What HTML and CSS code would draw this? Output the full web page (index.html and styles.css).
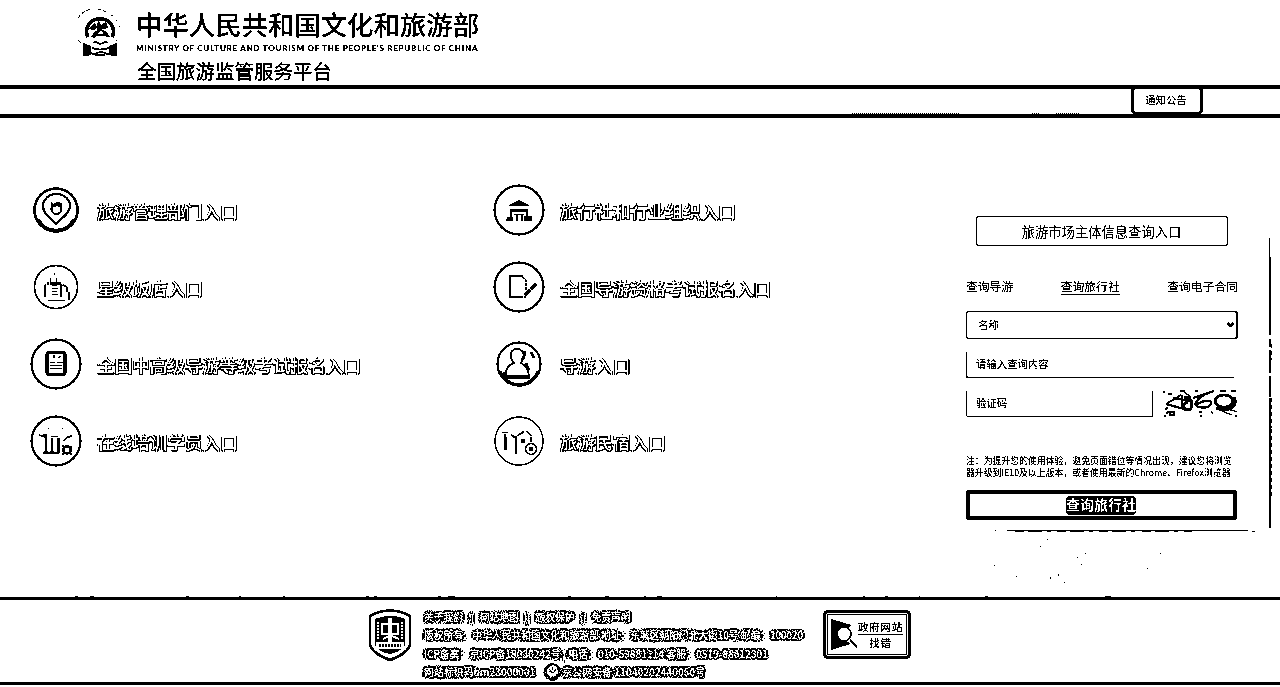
FILE: index.html
```html
<!DOCTYPE html>
<html lang="zh-CN">
<head>
<meta charset="utf-8">
<title>全国旅游监管服务平台</title>
<link rel="stylesheet" href="styles.css">
</head>
<body>
<svg class="defs" width="0" height="0">
  <filter id="bilevel" x="0" y="0" width="100%" height="100%" color-interpolation-filters="sRGB">
    <feComponentTransfer><feFuncR type="discrete" tableValues="0 0 0 1 1"/><feFuncG type="discrete" tableValues="0 0 0 1 1"/><feFuncB type="discrete" tableValues="0 0 0 1 1"/></feComponentTransfer>
  </filter>
  <filter id="speckle" x="-2%" y="-5%" width="104%" height="110%" color-interpolation-filters="sRGB">
    <feTurbulence type="fractalNoise" baseFrequency="0.9" numOctaves="2" seed="4"/>
    <feColorMatrix values="1 0 0 0 0  1 0 0 0 0  1 0 0 0 0  0 0 0 0 1" result="n"/>
    <feComposite in="SourceGraphic" in2="n" operator="arithmetic" k2="1" k3="2" k4="-0.8"/>
    <feComposite in2="SourceAlpha" operator="in"/>
  </filter>
</svg>
<div class="page">
  <header class="header">
    <svg class="emblem" width="44" height="50" viewBox="0 0 44 50">
      <path d="M3 34A20 20 0 0 1 28 3M33 6l2 1M38 11l1 1M41 17l1 1M38 31l1 1" fill="none" stroke="#000" stroke-dasharray="4 1.5"/>
      <path d="M10 28A13.500 12.500 0 1 1 34 28" fill="none" stroke="#000" stroke-width="3.500"/>
      <path d="M11 20l6-6 2 4-3 3zM20 10l3 6 5-3 2 6-6 1-3 4-2-4zM13 28l4-6 5-1-2 4-3 4zM23 21l5 1 4 6h-4z"/>
      <path d="M16 26h12" stroke="#000" stroke-width="1.500"/>
      <path d="M5 34l8 3v8l-3 2H5zM39 34l-8 3v8l3 2h5z"/>
      <path d="M15 34q3-2 5 0t5 0 5 0M14 39q8 3 17 0M10 43q5 3 9 1t8 0 8-1M17 46h10" fill="none" stroke="#000" stroke-width="1.500"/>
    </svg>
    <div class="brand">
      <div class="ministry">中华人民共和国文化和旅游部</div>
      <div class="english">MINISTRY OF CULTURE AND TOURISM OF THE PEOPLE'S REPUBLIC OF CHINA</div>
      <div class="platform">全国旅游监管服务平台</div>
    </div>
  </header>
  <nav class="nav"><svg class="trace" width="228" height="1" viewBox="0 0 228 1"><path d="M0 .500h108M180 .500h8M204 .500h24" stroke="#000" stroke-dasharray="1 1"/></svg><a class="notice">通知公告</a></nav>

  <main class="main">
    <section class="entries">
      <a class="entry"><svg class="icon" viewBox="0 0 52 52"><circle cx="26" cy="26" r="21.500" stroke-width="2.500"/><path d="M9 35a19 19 0 0 0 34 0" stroke-width="1.500"/><path d="M26 40C19 33 13 29 13 22a13.500 12 0 0 1 27 0c0 7-7 11-14 18z" stroke-width="2"/><circle cx="26.500" cy="25" r="5" stroke-width="2"/><path class="solid" d="M21 18l3 2 3-2 5 1v4h-3l-2-1-3 1-3 1z"/></svg><span>旅游管理部门入口</span></a>
      <a class="entry"><svg class="icon" viewBox="0 0 52 52"><circle cx="26" cy="26" r="21.500" stroke-width="1.500"/><path d="M15.500 23v13M20 22.500h11M17 22.500h2M31.500 23v13M37 26v5M39 31v8" stroke-width="1.800"/><path d="M18 39.500h17M22 24.500h5M22 27.500h6M22 30.500h5M22 33.500h6M20.500 17v4M24.500 12v2M26.500 17v4M33 24l4 2" stroke-width="1.400"/></svg><span>星级饭店入口</span></a>
      <a class="entry"><svg class="icon" viewBox="0 0 52 52"><circle cx="26" cy="26" r="24.500" stroke-width="2"/><rect x="17" y="14.500" width="18" height="22" rx="2.500" stroke-width="3"/><path d="M20 24.500h5M27 24.500h6M20 27.500h12M20 30.500h12M24 17v3M28 20l3-2" stroke-width="1"/></svg><span>全国中高级导游等级考试报名入口</span></a>
      <a class="entry"><svg class="icon" viewBox="0 0 52 52"><circle cx="26" cy="26" r="24.500" stroke-width="2"/><path d="M13 38h16" stroke-width="2.600"/><path d="M13 20h3v18M22 23v15M28.500 23v15" stroke-width="2.400"/><path d="M9 20l6 2M21 21.500h7M33 26l5-4 4-1M18 13l1 1M32 14l1-1" stroke-width="1.500"/><circle cx="37" cy="35" r="3.500" stroke-width="2.500"/><path d="M32 30l2 2M40 38l2 2M42 31l-2 2M32 40l2-2"/></svg><span>在线培训学员入口</span></a>
      <a class="entry"><svg class="icon" viewBox="0 0 52 52"><circle cx="26" cy="26" r="24.500" stroke-width="2"/><path class="solid" d="M26 16l10 5v1H16v-1zM17 25h18v3H17zM14 33h6v4h-7zM31 32h8v5h-8zM23 31h2v6h-2zM28 31h2v6h-2z"/><path d="M18 28v8M34 28v8M21 30.500h10"/></svg><span>旅行社和行业组织入口</span></a>
      <a class="entry"><svg class="icon" viewBox="0 0 52 52"><circle cx="26" cy="26" r="24.500" stroke-width="2"/><path d="M30 15H17v21h13" stroke-width="2"/><path d="M29 16l4 3v11M31 36h2" stroke-dasharray="3 1"/><path d="M32 34l5-5M38 28l5-5" stroke-width="3"/></svg><span>全国导游资格考试报名入口</span></a>
      <a class="entry"><svg class="icon" viewBox="0 0 52 52"><circle cx="26" cy="26" r="21.500" stroke-width="2"/><path d="M7 33a20 20 0 0 0 38 0" stroke-width="3"/><path d="M13 39q-2-10 8-14c-6-8-3-14 3-14s9 6 4 14q7 3 8 13" stroke-width="1.600"/><path d="M13 39h24" stroke-width="3"/><path d="M30 14h2l-1 5-2 3M38 14l3 6M33 25l3 7M12 34l-2 4" stroke-width="2.400"/></svg><span>导游入口</span></a>
      <a class="entry"><svg class="icon" viewBox="0 0 52 52"><circle cx="26" cy="26" r="24"/><path d="M9 17.500h6M13 22v13M12 19v16M18 20l5 3M23 21v18M24 21l6-4M33 16l6 5M38 22v5M28 19l3-3" stroke-width="1.500"/><path class="solid" d="M28 24h4v4h-4z"/><circle cx="38" cy="34" r="5.500"/><rect x="36.500" y="33" width="3" height="2"/></svg><span>旅游民宿入口</span></a>
    </section>

    <aside class="panel">
      <h2 class="panel-title">旅游市场主体信息查询入口</h2>
      <div class="tabs"><a>查询导游</a><a class="active">查询旅行社</a><a>查询电子合同</a></div>
      <div class="select"><span>名称</span><svg width="7" height="5" viewBox="0 0 7 5"><path d="M.5 1l3 3 3-3" fill="none" stroke="#000" stroke-width="2.200"/></svg></div>
      <div class="field">请输入查询内容</div>
      <div class="code-row">
        <div class="field code">验证码</div>
        <svg class="captcha" width="74" height="28" viewBox="0 0 74 28">
          <g fill="none" stroke="#000" stroke-width="2.600"><path d="M3 14L18 5M3 14l18 5M19 5v14M10 8l19 3" stroke-width="2"/><path d="M21 8c8-5 11 12 4 12-5 0-6-7 0-8"/><path d="M45 3C33 8 29 16 36 17c7 2 13-1 12-5-3-3-10 0-14 2M30 8L51 1" stroke-width="2.200"/><ellipse cx="61" cy="11" rx="9" ry="6"/><path d="M71 7c5 9-5 16-17 11M53 19l6-3"/></g>
          <path d="M0 2h2M5 4h4M17 1h5M32 1h3M57 1h6M68 1h5M2 20l3-3M7 22h4v3H7zM1 26h2M36 22h3M37 26h2M48 21l2 3M54 19l15 6M62 18l12 4M72 26h2M21 2l7 5M3 24l3-3" fill="none" stroke="#000" stroke-width="1.300"/>
        </svg>
      </div>
      <p class="note">注：为提升您的使用体验，避免页面错位等情况出现，建议您将浏览<br>器升级到IE10及以上版本，或者使用最新的Chrome、Firefox浏览器</p>
      <a class="submit"><span>查询旅行社</span></a>
      <svg class="shade" width="340" height="360" viewBox="0 0 340 360">
        <path d="M334.500 39v19" stroke-width="1"/><path d="M335 58v78M335 140v8M335 151v23M335 177v21M335 199v130" stroke-width="2"/><path d="M336.500 145v16M336.500 199v30M336.500 230v70" stroke-dasharray="4 3"/>
        <path d="M60 331.500h1M72 331.500h241"/><path d="M80 332.500h120M207 332.500h50M317 332.500h3" stroke-dasharray="9 4 14 5 4 6"/>
      </svg>
    </aside>
    <svg class="dust" width="340" height="46" viewBox="0 0 340 46"><path d="M112 .500h1M105 7.500h1M150 14.500h1M142 18.500h1M146 25.500h1M225 14.500h1M212 29.500h1M59 26.500h1M81 37.500h1M115 38v2M123 35v2M129 43.500h1" stroke="#000" shape-rendering="crispEdges"/></svg>
    <svg class="ticks" width="1280" height="1" viewBox="0 0 1280 1"><path d="M75 .500h3M90 .500h4M186 .500h3M239 .500h2M283 .500h2M366 .500h3M374 .500h3M438 .500h3M448 .500h7M568 .500h3M605 .500h4M644 .500h2M657 .500h5M776 .500h1M863 .500h2M885 .500h3M919 .500h1M985 .500h3M1105 .500h6" stroke="#000"/></svg>
  </main>

  <footer class="footer">
    <svg class="shield" width="46" height="56" viewBox="0 0 46 56">
      <path d="M23 2.500Q36 3 43 8v29q-3 9-20 15Q6 46 3 37V8Q10 3 23 2.500z" fill="#fff" stroke="#000" stroke-width="2.500"/>
      <path d="M23 8q9 0 15 3v26q-5 7-15 9Q12 44 8 37V11q7-3 15-3z"/>
      <g class="crest" fill="none" stroke="#fff"><path d="M23 10v24" stroke-width="4"/><path d="M15 16v10h16V16zM16 31l6-3M25 28l7 3" stroke-width="2"/><path d="M11 14v18M35 14v18" stroke-width="2" stroke-dasharray="2 1"/></g>
      <path d="M9 34h28v7H9z" fill="#fff"/><path d="M12 37.500h22" stroke="#000" stroke-width="2" stroke-dasharray="2 1"/>
    </svg>
    <div class="legal">
      <div class="links"><span>关于我们</span><i>||</i><span>网站地图</span><i>||</i><span>版权保护</span><i>||</i><span>免责声明</span></div>
      <div class="owner">版权所有：中华人民共和国文化和旅游部 地址：东城区朝阳门北大街10号 邮编：100020</div>
      <div class="record">ICP备案：京ICP备18030242号 | 电话：010-59881114 客服：0519-88012301</div>
      <div class="site"><span>网站标识码bm23000001</span><svg class="police" width="19" height="18" viewBox="0 0 19 18"><circle cx="9.500" cy="9" r="9"/><circle cx="9.500" cy="8" r="5.500" fill="#fff"/><path d="M6 6q3.500 7 7 0M9.500 4v3" fill="none" stroke="#000" stroke-width="1.500"/></svg><span>京公网安备 11040202440050号</span></div>
    </div>
    <div class="report">
      <svg width="30" height="34" viewBox="0 0 30 34"><path d="M1 1l20 6-3 3a8 8 0 0 0 0 14l2 2L1 32z"/><circle cx="14" cy="16" r="7" fill="#fff" stroke="#000" stroke-width="1.500"/><path d="M20 22l7 7" stroke="#000" stroke-width="2"/></svg>
      <div class="report-text"><span>政府网站</span><span class="second">找错</span></div>
    </div>
  </footer>
</div>
</body>
</html>
```
FILE: styles.css
```css
* { box-sizing: border-box; }
body { margin: 0; background: #fff; color: #000; font-family: "Noto Sans CJK SC", sans-serif; overflow: hidden; }
.defs { display: block; height: 0; }
.page { width: 1280px; height: 687px; background: #fff; display: flex; flex-direction: column; filter: url(#bilevel); }
.header { height: 85px; padding: 8px 0 0 78px; display: flex; gap: 14px; }
.emblem { margin-top: 1px; }
.brand { white-space: nowrap; }
.ministry { font-size: 26.4px; line-height: 32px; font-weight: 500; }
.english { font: 900 8px/12px Lato, sans-serif; letter-spacing: .75px; margin-top: 2px; }
.platform { font-size: 19.5px; line-height: 34px; padding-left: 1px; -webkit-text-stroke: .2px #000; }
.nav { height: 33px; border-top: 4px solid #000; border-bottom: 4px solid #000; display: flex; align-items: flex-end; }
.trace { margin-left: 852px; }
.notice { width: 72px; height: 27px; margin: 0 0 0 51px; border: 3px solid #000; border-width: 2px 3px; border-radius: 4px; font-size: 10.4px; line-height: 22px; padding-right: 2px; text-align: center; }
.main { height: 479px; display: flex; position: relative; }
.entries { width: 935px; padding: 53px 0 0 30px; display: grid; grid-template-columns: 463px 1fr; grid-template-rows: repeat(4, 77px); grid-auto-flow: column; }
.entry { display: flex; align-items: center; gap: 15px; height: 77px; font-size: 17.6px; font-weight: 500; color: #fff; text-shadow: 1px 1px 0 #000, 1px 0 0 #000, -1px 1px 0 #000; white-space: nowrap; }
.entry span { padding-top: 1px; }
.icon { width: 52px; height: 52px; fill: none; stroke: #000; stroke-width: 1.300; }
.icon .solid { fill: #000; stroke: none; }
.panel { width: 336px; height: 414px; padding: 98px 33px 0 31px; position: relative; }
.panel-title { width: 252px; height: 30px; margin: 0 0 0 10px; padding-right: 1px; border: 1px solid #000; border-radius: 3px; text-align: center; font-size: 13.3px; line-height: 30px; font-weight: 400; }
.tabs { margin: 31px 0 0; height: 18px; display: flex; justify-content: space-between; font-size: 11.8px; line-height: 17px; }
.tabs .active { border-bottom: 1px solid #000; }
.select { height: 28px; margin-top: 16px; border: 1px solid #000; border-width: 1px 2px 1px 1px; border-radius: 3px; padding: 0 2px 1px 11px; display: flex; align-items: center; justify-content: space-between; font-size: 10.4px; }
.field { width: 269px; height: 27px; margin-top: 12px; padding-left: 9px; border: 1px solid #000; border-width: 0 0 1px 1px; border-radius: 2px; font-size: 10.4px; line-height: 26px; }
.code-row { display: flex; margin-top: 12px; gap: 10px; }
.field.code { width: 187px; margin: 0; border-right-width: 1px; }
.note { margin: 37px 0 0; font-size: 8.87px; line-height: 12px; white-space: nowrap; font-weight: 400; }
.submit { display: flex; justify-content: center; align-items: center; width: 271px; height: 30px; margin-top: 11px; border: 4px solid #000; border-radius: 2px; }
.submit span { background: #000; color: #fff; font-size: 14px; font-weight: 700; line-height: 17px; height: 19px; margin-right: 1px; border-radius: 4px; }
.shade { position: absolute; left: 0; top: 81px; fill: none; stroke: #000; }
.dust { position: absolute; left: 935px; top: 421px; }
.ticks { position: absolute; left: 0; bottom: 0; }
.footer { height: 88px; border-top: 3px solid #000; border-bottom: 3px solid #000; display: flex; align-items: flex-start; padding-left: 367px; }
.shield { margin-top: 8px; flex: none; }
.legal { width: 400px; margin: 8px 0 0 11px; font-size: 9.72px; font-weight: 500; color: #fff; white-space: nowrap; text-shadow: 0 0 1px #000, 2px 0 1px #000, -2px 0 1px #000, 0 2px 1px #000, 0 -2px 1px #000, 2px 2px 2px #000, -2px -2px 2px #000, 2px -2px 2px #000, -2px 2px 2px #000; filter: url(#speckle); }
.legal div { display: flex; align-items: center; height: 18.3px; }
.links i { width: 17px; text-align: center; font-style: normal; }
.record { letter-spacing: .15px; }
.site { letter-spacing: .22px; }
.police { margin: 0 1px 0 7px; }
.report { width: 88px; height: 49px; margin: 10px 0 0 -1px; border: 3px solid #000; border-radius: 5px; display: flex; align-items: center; padding-left: 4px; box-shadow: inset 0 0 0 1px #fff, inset 0 0 0 2px #000; }
.report svg { flex: none; margin-right: -2px; }
.report-text { display: flex; flex-direction: column; font-size: 10.5px; line-height: 15px; font-weight: 500; letter-spacing: .8px; white-space: nowrap; }
.second { border-top: 1px solid #000; text-align: center; }
```
